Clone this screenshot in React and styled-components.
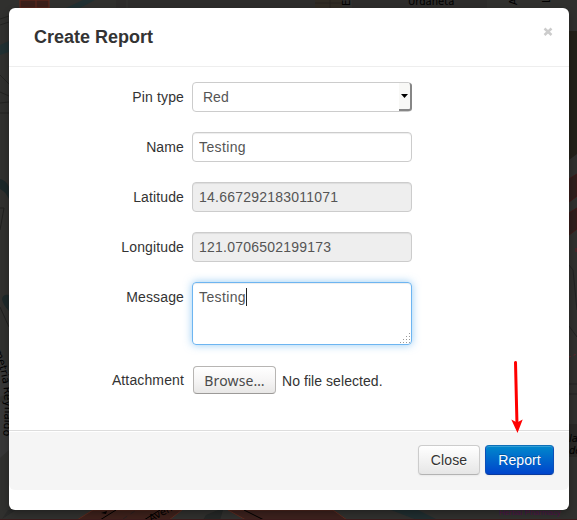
import React from 'react'
import styled, { createGlobalStyle } from 'styled-components'

const GlobalStyle = createGlobalStyle`
    * {
        box-sizing: border-box;
    }
    body {
        margin: 0;
        background: #30302e;
        color: #333;
        font-family: "Liberation Sans", Arial, sans-serif;
        font-size: 14px;
        line-height: 20px;
    }
`

const Page = styled.div`
    position: relative;
    height: 520px;
    padding: 8px 8px 10px 9px;
    overflow: hidden;
`

const Map = styled.svg`
    position: absolute;
    inset: 0;
`

const Modal = styled.div`
    position: relative;
    width: 560px;
    height: 502px;
    background: #fff;
    border-radius: 6px;
    box-shadow: 0 3px 7px rgba(0, 0, 0, 0.3);
`

const Header = styled.div`
    display: flex;
    justify-content: space-between;
    height: 59px;
    padding: 14px 16px 0 25px;
    border-bottom: 1px solid #eee;
`

const Title = styled.h3`
    margin: 0;
    font-size: 18px;
    line-height: 30px;
    font-weight: bold;
`

const CloseIcon = styled.svg`
    margin-top: 5px;
`

const Form = styled.div`
    height: 363px;
    padding: 15px 0 0;
`

const Row = styled.div`
    display: flex;
    gap: ${props => props.gap || 8}px;
    margin-bottom: 20px;
`

const Label = styled.label`
    width: 175px;
    padding-top: 5px;
    text-align: right;
    letter-spacing: 0.13px;
`

const Input = styled.input`
    width: 220px;
    height: 30px;
    padding: 4px 6px;
    border: 1px solid #ccc;
    border-radius: 4px;
    outline: none;
    background: ${props => props.readOnly ? '#eee' : '#fff'};
    box-shadow: inset 0 1px 1px rgba(0, 0, 0, 0.075);
    color: #555;
    font: 14px/20px "Liberation Sans", Arial, sans-serif;
    letter-spacing: ${props => props.readOnly ? 0.23 : 0.38}px;
`

const Select = styled.div`
    display: flex;
    justify-content: space-between;
    width: 220px;
    height: 30px;
    padding-left: 10px;
    border: 1px solid #ccc;
    border-radius: 4px;
    color: #555;
    line-height: 28px;
`

const SelectButton = styled.span`
    display: flex;
    align-items: center;
    justify-content: center;
    width: 13px;
    height: 28px;
    margin-right: -1px;
    border: solid #868686;
    border-width: 0 2px 2px 0;
    border-radius: 0 3px 3px 0;
    background: #f8f8f6;
`

const TextArea = styled.div`
    display: flex;
    position: relative;
    width: 220px;
    height: 63px;
    padding: 4px 6px;
    border: 1px solid #6db5f1;
    border-radius: 4px;
    box-shadow: inset 0 1px 1px rgba(0, 0, 0, 0.075), 0 0 8px rgba(82, 168, 236, 0.6);
    color: #555;
    letter-spacing: 0.38px;
`

const Caret = styled.span`
    width: 1px;
    height: 18px;
    margin-top: 1px;
    background: #222;
`

const Grip = styled.svg`
    position: absolute;
    right: 1px;
    bottom: 1px;
`

const Browse = styled.button`
    width: 83px;
    height: 28px;
    margin-top: 1px;
    padding: 1px 0 0;
    border: 1px solid #b7b5b3;
    border-bottom-color: #9c9a98;
    border-radius: 4px;
    background: linear-gradient(#fff, #f5f4f4 55%, #e8e7e6);
    color: #4a4a4a;
    font: 14px/20px "Noto Sans", sans-serif;
    letter-spacing: 0.15px;
`

const FileName = styled.span`
    margin-left: -3px;
    padding-top: 6px;
    letter-spacing: 0.06px;
`

const Footer = styled.div`
    display: flex;
    justify-content: flex-end;
    gap: 5px;
    height: 60px;
    padding: 14px 15px 15px;
    border-top: 1px solid #ddd;
    border-radius: 0 0 6px 6px;
    background: #f5f5f5;
    box-shadow: inset 0 1px 0 #fff;
`

const Button = styled.button`
    width: ${props => props.$primary ? 69 : 62}px;
    height: 30px;
    padding: 0;
    border: 1px solid;
    border-color: ${props => props.$primary ? '#0c6fb8 #0c4fb8 #0a3a9c' : '#ccc #ccc #b3b3b3'};
    border-radius: 4px;
    background: ${props => props.$primary ? 'linear-gradient(#08c, #04c)' : 'linear-gradient(#fff, #e6e6e6)'};
    box-shadow: inset 0 1px 0 rgba(255, 255, 255, 0.2), 0 1px 2px rgba(0, 0, 0, 0.05);
    color: ${props => props.$primary ? '#fff' : '#333'};
    text-shadow: ${props => props.$primary ? '0 -1px 0 rgba(0, 0, 0, 0.25)' : '0 1px 1px rgba(255, 255, 255, 0.75)'};
    font: 14px/20px "Liberation Sans", Arial, sans-serif;
    letter-spacing: 0.1px;
`

const Arrow = styled.svg`
    position: absolute;
    left: 500px;
    top: 352px;
`

const dots = [[9, 0], [6, 3], [9, 3], [3, 6], [6, 6], [9, 6], [0, 9], [3, 9], [6, 9], [9, 9]]

function StreetMap() {
    return (
        <Map width="577" height="520" fontFamily="DejaVu Sans, sans-serif" fontSize="10">
            <path d="M116 0h10v8h-10zM128 0h222v8h-222zM352 0h135v8h-135z" fill="#2d2c2b" />
            <path d="M315 0h27v8h-27z" fill="#302b24" />
            <path d="M315 3h27M330 0v8" stroke="#26221e" />
            <path d="M20 0h29v8h-29z" fill="#3b1f1a" stroke="#64291d" />
            <path d="M36 0v8" stroke="#64291d" />
            <path d="M83 0h12L80 8H66zM0 45l9-4v11l-9 3z" fill="#213032" />
            <path d="M0 19l9-3M0 25l9-3M0 75l9 9M0 92l9 4M0 103l9-1M0 113h9" stroke="#232321" fill="none" />
            <path d="M0 179q6 1 9 8v12q-4-8-9-10zM9 295q-6-1-7 4 1 6 7 12z" fill="#1c2829" />
            <path d="M0 208h4L0 230M0 307l9 20" stroke="#20201f" fill="none" />
            <path d="M0 352l9 22v19l-9 4zM0 402l9-2v50l-9 8z" fill="#373737" />
            <path d="M569 31h8v123l-8 6z" fill="#232119" />
            <path d="M569 179l8-5v22l-8 6zM569 213l8-5v21l-8 6z" fill="#2f1f1d" stroke="#3f1a18" />
            <path d="M569 265l4 5 4 40M569 326l8 11M569 384h8M569 394h8" stroke="#222" fill="none" />
            <path d="M569 424h8v33h-8z" fill="#292826" />
            <path d="M569 357l8-3" stroke="#65242a" strokeDasharray="2 3" />
            <path d="M576 248v4" stroke="#641c24" />
            <path d="M8 510h8l-14 9z" fill="#292a29" />
            <path d="M77 520l16-10h89l-13 10z" fill="#3d211b" stroke="#5d2a1e" />
            <path d="M100 520l16-10M144 520l16-10" stroke="#000" />
            <path d="M123 519l12-8" stroke="#292020" strokeDasharray="5 4" />
            <path d="M101 513l6-2-1 3z" />
            <path d="M206 515l12-5h5l-3 10h-17z" fill="#252827" />
            <path d="M228 510h105l14 10H246z" fill="#3b211d" stroke="#5d2a1e" />
            <path d="M244 510l20 10" stroke="#000" />
            <path d="M391 510h27l20 10h-21z" fill="#202e30" />
            <path d="M0 519.5h577" stroke="#3d1b1c" />
            <text x="408" y="5">Urdaneta</text>
            <text transform="translate(350 6) rotate(-90)">E</text>
            <text transform="translate(517 5) rotate(-90)">A</text>
            <text transform="translate(550 3) rotate(-90)">L</text>
            <text transform="translate(151 522) rotate(-28)">Avenue</text>
            <path id="lane" d="M-13 338Q10 375 3 436" fill="none" />
            <text fontSize="10.5"><textPath href="#lane">Demetria Reynaldo</textPath></text>
            <text x="569" y="442" fontStyle="italic">la</text>
            <text x="569" y="454" fontStyle="italic">de</text>
            <text x="499" y="515" fill="#52104a" fontFamily="Liberation Sans" fontSize="8">Herbal Pharmacy</text>
        </Map>
    )
}

class App extends React.Component {
    render() {
        return (
            <Page>
                <GlobalStyle />
                <StreetMap />
                <Modal>
                    <Header>
                        <Title>Create Report</Title>
                        <CloseIcon width="10" height="10" viewBox="0 0 10 10">
                            <path d="M1.5 1.5l7 6.5M8.5 1.5l-7 6.5" stroke="#ccc" strokeWidth="2.5" />
                        </CloseIcon>
                    </Header>
                    <Form>
                        <Row>
                            <Label>Pin type</Label>
                            <Select>
                                Red
                                <SelectButton>
                                    <svg width="7" height="4"><path d="M0 0h7L3.5 4z" /></svg>
                                </SelectButton>
                            </Select>
                        </Row>
                        <Row>
                            <Label>Name</Label>
                            <Input defaultValue="Testing" />
                        </Row>
                        <Row>
                            <Label>Latitude</Label>
                            <Input readOnly value="14.667292183011071" />
                        </Row>
                        <Row>
                            <Label>Longitude</Label>
                            <Input readOnly value="121.0706502199173" />
                        </Row>
                        <Row>
                            <Label>Message</Label>
                            <TextArea>
                                Testing<Caret />
                                <Grip width="10" height="10">
                                    {dots.map(([x, y]) => <rect key={`${x}-${y}`} x={x} y={y} width="1" height="1" fill="#999" />)}
                                </Grip>
                            </TextArea>
                        </Row>
                        <Row gap={9}>
                            <Label>Attachment</Label>
                            <Browse>Browse…</Browse>
                            <FileName>No file selected.</FileName>
                        </Row>
                    </Form>
                    <Footer>
                        <Button>Close</Button>
                        <Button $primary>Report</Button>
                    </Footer>
                </Modal>
                <Arrow width="36" height="84">
                    <path d="M15.5 10.5L17 73" stroke="#f00" strokeWidth="3" strokeLinecap="round" />
                    <path d="M11.3 67.5l5.7 3 5.7-3L17.5 81z" fill="#f00" />
                </Arrow>
            </Page>
        )
    }
}

export default App
